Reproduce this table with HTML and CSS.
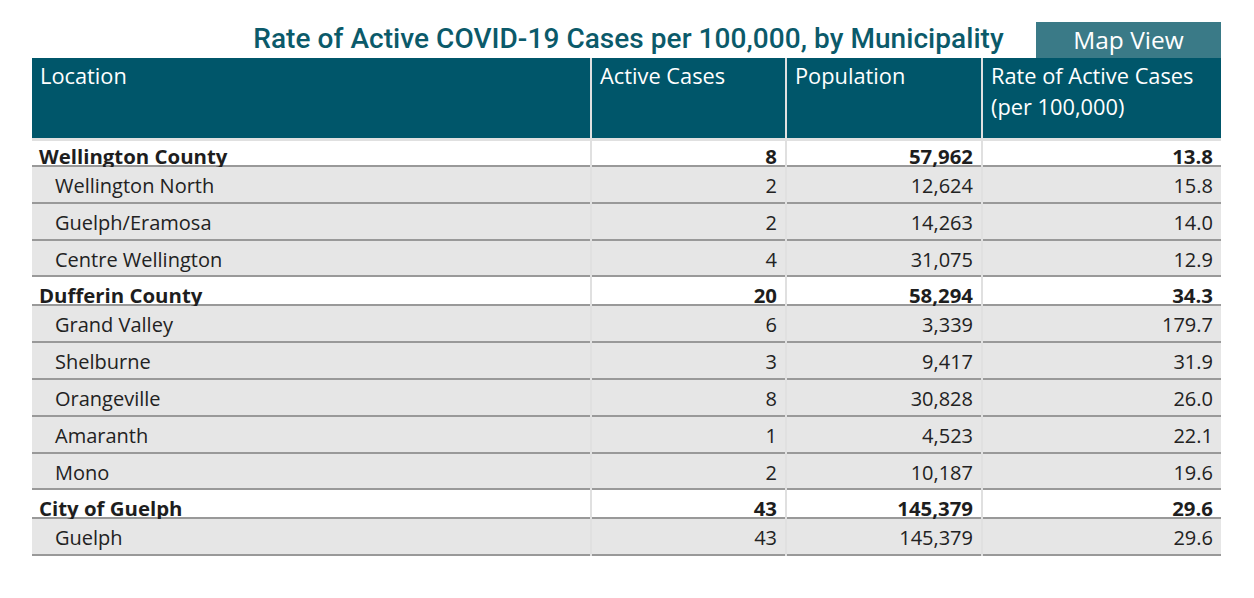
FILE: index.html
```html
<!DOCTYPE html>
<html>
<head>
<meta charset="utf-8">
<link rel="stylesheet" href="styles.css">
</head>
<body>
<div class="page">
  <div class="topbar">
    <div class="spacer"></div>
    <h1 class="title">Rate of Active COVID-19 Cases per 100,000, by Municipality</h1>
    <div class="btn-wrap"><button class="map-btn">Map View</button></div>
  </div>
  <div class="table">
    <div class="row head">
      <div class="cell">Location</div>
      <div class="cell">Active Cases</div>
      <div class="cell">Population</div>
      <div class="cell">Rate of Active Cases<br>(per 100,000)</div>
    </div>
    <div class="body">
      <div class="row group first">
        <div class="cell name">Wellington County</div>
        <div class="cell num">8</div>
        <div class="cell num">57,962</div>
        <div class="cell num">13.8</div>
      </div>
      <div class="row child">
        <div class="cell name">Wellington North</div>
        <div class="cell num">2</div>
        <div class="cell num">12,624</div>
        <div class="cell num">15.8</div>
      </div>
      <div class="row child">
        <div class="cell name">Guelph/Eramosa</div>
        <div class="cell num">2</div>
        <div class="cell num">14,263</div>
        <div class="cell num">14.0</div>
      </div>
      <div class="row child">
        <div class="cell name">Centre Wellington</div>
        <div class="cell num">4</div>
        <div class="cell num">31,075</div>
        <div class="cell num">12.9</div>
      </div>
      <div class="row group">
        <div class="cell name">Dufferin County</div>
        <div class="cell num">20</div>
        <div class="cell num">58,294</div>
        <div class="cell num">34.3</div>
      </div>
      <div class="row child">
        <div class="cell name">Grand Valley</div>
        <div class="cell num">6</div>
        <div class="cell num">3,339</div>
        <div class="cell num">179.7</div>
      </div>
      <div class="row child">
        <div class="cell name">Shelburne</div>
        <div class="cell num">3</div>
        <div class="cell num">9,417</div>
        <div class="cell num">31.9</div>
      </div>
      <div class="row child">
        <div class="cell name">Orangeville</div>
        <div class="cell num">8</div>
        <div class="cell num">30,828</div>
        <div class="cell num">26.0</div>
      </div>
      <div class="row child">
        <div class="cell name">Amaranth</div>
        <div class="cell num">1</div>
        <div class="cell num">4,523</div>
        <div class="cell num">22.1</div>
      </div>
      <div class="row child">
        <div class="cell name">Mono</div>
        <div class="cell num">2</div>
        <div class="cell num">10,187</div>
        <div class="cell num">19.6</div>
      </div>
      <div class="row group">
        <div class="cell name">City of Guelph</div>
        <div class="cell num">43</div>
        <div class="cell num">145,379</div>
        <div class="cell num">29.6</div>
      </div>
      <div class="row child">
        <div class="cell name">Guelph</div>
        <div class="cell num">43</div>
        <div class="cell num">145,379</div>
        <div class="cell num">29.6</div>
      </div>
    </div>
  </div>
</div>
</body>
</html>
```

FILE: styles.css
```css
html, body {
  margin: 0;
  padding: 0;
  background: #ffffff;
}

.page {
  padding: 22px 0 0 32px;
  width: 1189px;
  font-family: "Open Sans", "Noto Sans", sans-serif;
  color: #222222;
}

.topbar {
  display: grid;
  grid-template-columns: 1fr auto 1fr;
  align-items: stretch;
  height: 36px;
}

.title {
  margin: 0;
  font-family: Roboto, "DejaVu Sans", sans-serif;
  font-weight: 500;
  font-size: 28px;
  line-height: 34px;
  color: #0b5a6a;
  letter-spacing: 0.05px;
  white-space: nowrap;
  padding: 0 0 0 4px;
}

.btn-wrap {
  display: flex;
  justify-content: flex-end;
}

.map-btn {
  width: 185px;
  height: 37px;
  border: none;
  margin: 0;
  padding: 0 0 2px 0;
  background: #3a7a87;
  color: #ffffff;
  font-family: "Open Sans", "Noto Sans", sans-serif;
  font-size: 24.5px;
  line-height: 35px;
}

.table {
  display: flex;
  flex-direction: column;
  gap: 3px;
  background: #e0e0e0;
}

.body {
  display: flex;
  flex-direction: column;
  background: #e0e0e0;
}

.row {
  display: grid;
  grid-template-columns: 558px 193px 194px 238px;
  column-gap: 2px;
  background: #e0e0e0;
}

.head .cell {
  background: #00566a;
  color: #ffffff;
  font-size: 21.8px;
  line-height: 31px;
  height: 80px;
  padding: 2px 8px 0 8px;
  box-sizing: border-box;
  white-space: nowrap;
}

.group .cell {
  background: #ffffff;
  height: 29px;
  box-sizing: border-box;
  border-bottom: 2px solid #999999;
  font-weight: 700;
  font-size: 20.4px;
  line-height: 20px;
  padding: 8px 8px 0 7px;
  color: #1e1e1e;
  white-space: nowrap;
}

.group.first .cell {
  height: 26px;
  padding-top: 5px;
}

.child .cell {
  background: #e6e6e6;
  height: 36.8px;
  box-sizing: border-box;
  border-bottom: 2px solid #999999;
  font-size: 20px;
  line-height: 34px;
  padding: 2px 8px 0 8px;
  white-space: nowrap;
}

.child .cell.name {
  padding-left: 23px;
}

.num {
  text-align: right;
}
```
